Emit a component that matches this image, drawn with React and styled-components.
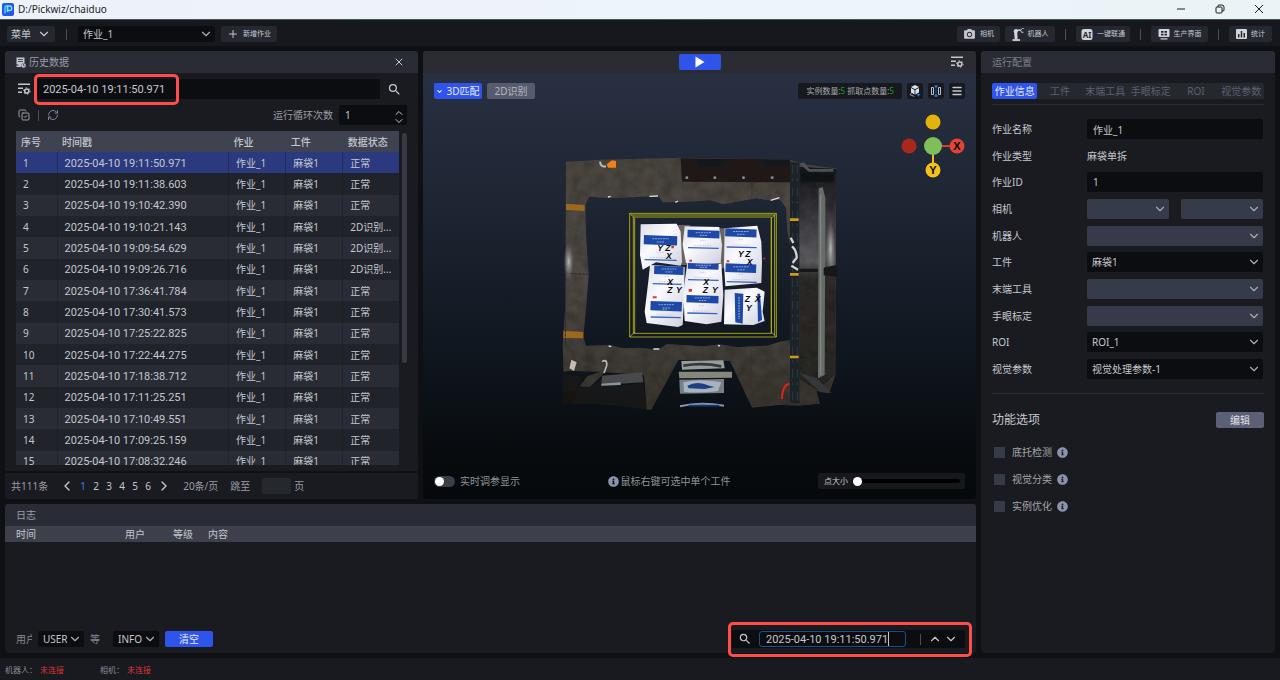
import { useState } from "react";
import styled, { createGlobalStyle } from "styled-components";
import {
  ChevronDown,
  ChevronLeft,
  ChevronRight,
  ChevronUp,
  CopyCheck,
  Menu,
  Plus,
  RefreshCw,
  X,
} from "lucide-react";
import { MdPhotoCamera, MdSearch } from "react-icons/md";
import { FaInfoCircle } from "react-icons/fa";

const GlobalStyle = createGlobalStyle`
  :root {
    --page: #0f1014;
    --panel: #1a1b20;
    --head: #2a2c35;
    --field: #0c0d10;
    --disabled: #373a48;
    --primary: #2f54eb;
    --muted: #5b6077;
    --text: #c4c7cf;
    --dim: #9a9ca3;
    --danger: #ff4d4a;
  }
  * {
    box-sizing: border-box;
  }
  body {
    margin: 0;
    background: var(--page);
    color: var(--text);
    font: 10px/16px "Noto Sans", "Noto Sans CJK SC", sans-serif;
  }
  button, input, select {
    margin: 0;
    padding: 0;
    border: none;
    outline: none;
    font: inherit;
    color: inherit;
    background: none;
  }
  svg {
    display: block;
    flex: none;
  }
`;

const Page = styled.div`
  display: flex;
  flex-direction: column;
  min-height: 100vh;
`;
const TitleBar = styled.header`
  display: flex;
  align-items: center;
  gap: 4px;
  height: 20px;
  padding: 0 14px 1px 2px;
  background: linear-gradient(90deg, #edf2fa, #eef4fc 60%, #eaf3f6);
  border-bottom: 1px solid #4b5350;
  color: #1c1c1e;
`;
const WindowButtons = styled.div`
  display: flex;
  gap: 25px;
  margin-left: auto;
  & button {
    display: flex;
    justify-content: center;
    width: 14px;
  }
`;
const Toolbar = styled.nav`
  display: flex;
  align-items: center;
  height: 26px;
  padding: 2px 8px 0 7px;
  background: #17181d;
`;
const ToolGroup = styled.div`
  display: flex;
  gap: ${(props) => props.$gap}px;
`;
const ToolButton = styled.button`
  display: flex;
  align-items: center;
  justify-content: center;
  gap: ${(props) => props.$gap || 4}px;
  width: ${(props) => props.$width}px;
  height: 16px;
  border-radius: 2px;
  background: #262831;
  font-size: ${(props) => (props.$small ? 7 : 10)}px;
  white-space: nowrap;
`;
const Divider = styled.span`
  width: 1px;
  height: 11px;
  margin: 0 ${(props) => props.$space || 10}px;
  background: #4a4e5c;
`;
const Spacer = styled.div`
  flex: 1;
`;

const SelectWrapper = styled.div`
  display: grid;
  align-items: center;
  width: ${(props) => (props.$width ? `${props.$width}px` : "100%")};
  height: ${(props) => props.$height || 20}px;
  border-radius: 2px;
  background: ${(props) => (props.$off ? "var(--disabled)" : "var(--field)")};
  & > * {
    grid-area: 1 / 1;
  }
  & svg {
    justify-self: end;
    margin-right: 2px;
    color: #a9adba;
    pointer-events: none;
  }
  & select {
    width: 100%;
    height: 100%;
    padding-left: 5px;
    color: var(--text);
    appearance: none;
    opacity: 1;
  }
`;

const Workspace = styled.main`
  flex: 1;
  display: grid;
  grid-template-columns: minmax(0, 1fr) 294px;
  gap: 5px;
  padding: 5px;
`;
const MainColumn = styled.div`
  display: flex;
  flex-direction: column;
  gap: 5px;
`;
const TopRow = styled.div`
  flex: 1;
  display: grid;
  grid-template-columns: 413px minmax(0, 1fr);
  gap: 5px;
`;
const Panel = styled.section`
  display: flex;
  flex-direction: column;
  min-width: 0;
  border-radius: 3px;
  overflow: hidden;
  background: var(--panel);
`;
const PanelHead = styled.div`
  display: flex;
  align-items: center;
  gap: 3px;
  height: 22px;
  padding: 0 ${(props) => props.$right || 11}px 0 11px;
  border-radius: 3px 3px 0 0;
  background: var(--head);
  color: ${(props) => (props.$faint ? "#7e818b" : "var(--dim)")};
  & h2 {
    margin: 0;
    font-size: 10px;
    font-weight: 400;
  }
  & > button {
    margin-left: auto;
    color: var(--text);
  }
`;

const HistoryBody = styled.div`
  flex: 1;
  display: flex;
  flex-direction: column;
  padding: 6px 11px;
`;
const SearchRow = styled.div`
  display: flex;
  align-items: center;
  gap: 5px;
  padding-left: 2px;
  & input {
    flex: 1;
    height: 20px;
    padding: 0 7px;
    border-radius: 2px;
    background: var(--field);
    font: 11px "Roboto", sans-serif;
  }
  & button {
    margin: 0 5px 0 2px;
  }
`;
const LoopRow = styled.div`
  display: flex;
  align-items: center;
  height: 20px;
  margin: 6px 0;
  padding-left: 2px;
  color: var(--dim);
  & label {
    margin: 0 6px 0 auto;
  }
`;
const Stepper = styled.div`
  display: flex;
  align-items: center;
  width: 68px;
  height: 20px;
  padding: 0 2px 0 6px;
  border-radius: 2px;
  background: var(--field);
  color: var(--text);
  & input {
    flex: 1;
    min-width: 0;
  }
  & button {
    display: block;
    height: 8px;
  }
`;
const TableArea = styled.div`
  display: flex;
  gap: 3px;
  height: 334px;
  overflow: hidden;
`;
const Scrollbar = styled.div`
  width: 5px;
  height: 230px;
  margin-top: 2px;
  border-radius: 3px;
  background: #373a44;
`;
const HistoryTable = styled.table`
  flex: 1;
  height: 341px;
  table-layout: fixed;
  border-collapse: collapse;
  & th {
    height: 21px;
    padding: 0 5px;
    background: #3f4250;
    font-weight: 500;
    text-align: left;
  }
  & td {
    padding: 0 7px;
    border-right: 1px solid rgba(20, 22, 30, 0.35);
    white-space: nowrap;
  }
  & td:last-child {
    border-right: none;
  }
  & tbody tr {
    background: #20232a;
  }
  & tbody tr:nth-child(odd) {
    background: #292c34;
  }
  & tbody tr.active {
    background: #2b3a7e;
  }
  & time {
    font: 11px "Roboto", sans-serif;
  }
`;
const Pager = styled.footer`
  display: flex;
  align-items: center;
  height: 28px;
  padding: 0 6px;
  border-top: 2px solid #101115;
  color: var(--dim);
  & label {
    margin-left: 12px;
  }
  & input {
    width: 29px;
    height: 16px;
    margin: 0 3px 0 12px;
    border-radius: 2px;
    background: #262830;
  }
`;
const PageList = styled.div`
  display: flex;
  align-items: center;
  gap: 1px;
  margin: 0 10px;
  color: var(--text);
  & button {
    display: flex;
    justify-content: center;
    width: 12px;
  }
  & button.active {
    color: #2c7be5;
  }
  & button:first-child,
  & button:last-child {
    width: 18px;
  }
`;

const ViewerHead = styled.div`
  display: grid;
  grid-template-columns: 1fr 42px 1fr;
  align-items: center;
  height: 22px;
  background: #2b2c33;
  & > :last-child {
    grid-column: 3;
    justify-self: end;
    margin-right: 12px;
  }
`;
const PlayButton = styled.button`
  grid-column: 2;
  display: grid;
  place-items: center;
  height: 16px;
  border-radius: 2px;
  background: var(--primary);
`;
const Scene = styled.div`
  position: relative;
  flex: 1;
  display: flex;
  flex-direction: column;
  padding: 10px 11px;
  background: linear-gradient(#283042, #1c2330 36%, #10161e 66%, #070b0e 90%, #06090b);
`;
const SceneBar = styled.div`
  display: flex;
  align-items: center;
  gap: 5px;
  height: 16px;
`;
const ModeButton = styled.button`
  display: flex;
  align-items: center;
  justify-content: center;
  gap: 3px;
  width: 48px;
  height: 16px;
  border-radius: 2px;
  background: ${(props) => (props.$active ? "var(--primary)" : "#575b6e")};
  color: ${(props) => (props.$active ? "#e6e9f5" : "#b5b7bf")};
`;
const Counter = styled.div`
  height: 16px;
  padding: 0 8px;
  border-radius: 2px;
  background: #17191f;
  color: #a9abb1;
  font-size: 8px;
  & b {
    color: #12a11b;
    font-weight: 400;
  }
`;
const SceneButton = styled.button`
  display: grid;
  place-items: center;
  width: 16px;
  height: 16px;
  border-radius: 2px;
  background: #17191f;
`;
const Stage = styled.div`
  flex: 1;
  display: grid;
  place-items: center;
  padding-bottom: 7px;
`;
const AxisGizmo = styled.svg`
  position: absolute;
  top: 40px;
  right: 10px;
`;
const SceneFooter = styled.div`
  display: flex;
  align-items: center;
  justify-content: space-between;
  height: 16px;
  color: #8f9194;
`;
const Switch = styled.label`
  display: flex;
  align-items: center;
  gap: 5px;
  & input {
    width: 21px;
    height: 11px;
    border-radius: 6px;
    background: #3b3e48;
    appearance: none;
  }
  & input::before {
    content: "";
    display: block;
    width: 9px;
    height: 9px;
    margin: 1px;
    border-radius: 50%;
    background: white;
  }
`;
const Hint = styled.div`
  display: flex;
  align-items: center;
  gap: 2px;
  & svg {
    color: #8b92ab;
  }
`;
const SizeSlider = styled.label`
  display: flex;
  align-items: center;
  gap: 5px;
  width: 147px;
  height: 16px;
  padding: 0 5px 0 6px;
  border-radius: 2px;
  background: #17181c;
  color: var(--text);
  font-size: 8px;
  white-space: nowrap;
  & input {
    flex: 1;
    min-width: 0;
    height: 4px;
    border-radius: 2px;
    background: black;
    appearance: none;
  }
  & input::-webkit-slider-thumb {
    width: 9px;
    height: 9px;
    border-radius: 50%;
    background: white;
    appearance: none;
  }
`;

const LogPanel = styled(Panel)`
  height: 149px;
  overflow: visible;
`;
const LogTable = styled.table`
  width: 100%;
  table-layout: fixed;
  border-collapse: collapse;
  & th {
    height: 16px;
    padding: 0 0 0 11px;
    background: #3d404b;
    line-height: 15px;
    font-weight: 400;
    text-align: left;
  }
`;
const LogControls = styled.div`
  display: flex;
  align-items: center;
  gap: 6px;
  margin-top: auto;
  padding: 0 11px 5px;
  color: #868892;
`;
const FilterLabel = styled.label`
  width: ${(props) => props.$width}px;
  margin-right: ${(props) => props.$space || 0}px;
  overflow: hidden;
  white-space: nowrap;
`;
const BlueButton = styled.button`
  width: 48px;
  height: 16px;
  border-radius: 2px;
  background: var(--primary);
  color: #e6e9f5;
`;
const FindBox = styled.div`
  position: relative;
  display: flex;
  align-items: center;
  width: 233px;
  height: 18px;
  margin-left: auto;
  padding: 0 7px 0 6px;
  border-radius: 2px;
  background: var(--field);
  color: var(--text);
`;
const FindField = styled.div`
  display: flex;
  align-items: center;
  width: 147px;
  height: 16px;
  margin-left: 7px;
  padding-left: 6px;
  border: 1px solid #1f4f8a;
  border-radius: 3px;
  & input {
    field-sizing: content;
    font: 11px "Roboto", sans-serif;
  }
`;
const FindSteps = styled.div`
  display: flex;
  gap: 2px;
`;
const Caret = styled.span`
  width: 1px;
  height: 14px;
  background: #c4c7cf;
`;
/* red frame that lies over the page around a field */
const Marker = styled.div`
  position: absolute;
  inset: ${(props) => props.$inset};
  width: ${(props) => (props.$width ? `${props.$width}px` : "auto")};
  border: 3px solid var(--danger);
  border-radius: 5px;
  pointer-events: none;
`;
const MarkedField = styled.div`
  position: relative;
  flex: 1;
  display: flex;
`;

const ConfigBody = styled.div`
  display: flex;
  flex-direction: column;
  padding: 10px 11px;
`;
const Tabs = styled.div`
  display: grid;
  grid-template-columns: repeat(6, 1fr);
  border-radius: 2px;
  background: #26282f;
  color: #5c6070;
  & button {
    height: 16px;
    border-radius: 2px;
    white-space: nowrap;
  }
  & button.active {
    background: var(--primary);
    color: #e6e9f5;
  }
`;
const Rule = styled.hr`
  width: 100%;
  height: 1px;
  margin: ${(props) => props.$space};
  border: none;
  background: #2b2d33;
`;
const Form = styled.div`
  display: flex;
  flex-direction: column;
  justify-content: space-between;
  height: 260px;
`;
const FormRow = styled.div`
  display: grid;
  grid-template-columns: 95px 1fr;
  align-items: center;
  height: 20px;
  padding-right: 1px;
`;
const TextField = styled.input`
  width: 100%;
  height: 20px;
  padding: 0 6px;
  border-radius: 2px;
  background: var(--field);
`;
const Pair = styled.div`
  display: grid;
  grid-template-columns: 1fr 1fr;
  gap: 12px;
`;
const OptionsHead = styled.div`
  display: flex;
  align-items: center;
  justify-content: space-between;
  margin-bottom: 14px;
  & h3 {
    margin: 0;
    font-size: 12px;
    font-weight: 400;
  }
  & button {
    width: 48px;
    height: 16px;
    border-radius: 2px;
    background: var(--muted);
    color: #e0e2ea;
  }
`;
const Options = styled.div`
  display: flex;
  flex-direction: column;
  gap: 7px;
  padding: 0 2px;
  & label {
    display: flex;
    align-items: center;
    height: 20px;
    color: #a5a6aa;
  }
  & input {
    width: 11px;
    height: 11px;
    margin-right: 7px;
    background: var(--disabled);
    appearance: none;
  }
  & svg {
    margin-left: 5px;
    color: #8b92ab;
  }
`;
const StatusBar = styled.footer`
  display: flex;
  gap: 36px;
  height: 22px;
  padding: 4px 5px;
  background: #191a1f;
  color: #8b8e97;
  font-size: 8px;
  & b {
    margin-left: 3px;
    color: #d8343a;
    font-weight: 400;
  }
`;

const stamps = [
  "2025-04-10 19:11:50.971",
  "2025-04-10 19:11:38.603",
  "2025-04-10 19:10:42.390",
  "2025-04-10 19:10:21.143",
  "2025-04-10 19:09:54.629",
  "2025-04-10 19:09:26.716",
  "2025-04-10 17:36:41.784",
  "2025-04-10 17:30:41.573",
  "2025-04-10 17:25:22.825",
  "2025-04-10 17:22:44.275",
  "2025-04-10 17:18:38.712",
  "2025-04-10 17:11:25.251",
  "2025-04-10 17:10:49.551",
  "2025-04-10 17:09:25.159",
  "2025-04-10 17:08:32.246",
];

const tabs = ["作业信息", "工件", "末端工具", "手眼标定", "ROI", "视觉参数"];
const options = ["底托检测", "视觉分类", "实例优化"];

const SelectBox = ({ id, label, value = "", width, height, off }) => (
  <SelectWrapper $width={width} $height={height} $off={off}>
    <select id={id} aria-label={label} disabled={off}>
      <option>{value}</option>
    </select>
    <ChevronDown size={14} />
  </SelectWrapper>
);

const AppLogo = () => (
  <svg width="12" height="13" viewBox="0 0 12 13">
    <rect width="12" height="13" rx="2" fill="#2457ea" />
    <path d="M3 10.500V4.500Q3 3 4.500 3H5.500V8.500" fill="none" stroke="#3fd7f5" strokeWidth="1.500" />
    <path d="M5.500 9V3H7.500a2 2 0 0 1 0 4.500H5.500" fill="none" stroke="#7fe6fb" strokeWidth="1.400" />
  </svg>
);

const FilterIcon = () => (
  <svg width="13" height="12" viewBox="0 0 13 12" fill="none" stroke="#c4c7cf">
    <path d="M0 1.200h12M0 5.200h5M0 9.200h4" strokeWidth="1.400" />
    <circle cx="8.800" cy="8" r="2.100" strokeWidth="1.500" />
    <circle cx="8.800" cy="8" r="3.300" strokeWidth="1" strokeDasharray="1.300 2.150" />
  </svg>
);

const HistoryIcon = () => (
  <svg width="10" height="11" viewBox="0 0 10 11">
    <path d="M0.500 0.500h8v5.500a3 3 0 0 0-3.500 4H0.500V8.500H2.500V7.500H0.500z" fill="#c4c7cf" />
    <path d="M2 2.500h5M2 4.500h5" stroke="#2a2c35" strokeWidth="0.800" />
    <circle cx="7.500" cy="8.500" r="2.300" fill="#c4c7cf" />
    <path d="M7.500 7v1.700h1.300" stroke="#2a2c35" strokeWidth="0.700" fill="none" />
  </svg>
);

const RobotIcon = () => (
  <svg width="12" height="13" viewBox="0 0 12 13" fill="none" stroke="#d3d5da">
    <path d="M0.500 12h7.500" strokeWidth="1.800" />
    <path d="M4.200 11L3.600 4" strokeWidth="3" />
    <circle cx="3.800" cy="3.200" r="1.700" fill="#d3d5da" />
    <path d="M4 2.500L8.500 2" strokeWidth="1.600" />
    <path d="M8.500 2l2-1.500M8.500 2l1 2.300h2M10.500 0.500h1.200" strokeWidth="0.900" />
  </svg>
);

const AiIcon = () => (
  <svg width="12" height="11" viewBox="0 0 12 11">
    <rect x="0.500" width="11" height="11" rx="2.500" fill="#d3d5da" />
    <text x="6" y="8.500" fontSize="8" fontWeight="700" textAnchor="middle" fill="#262831">
      AI
    </text>
  </svg>
);

const ScreenIcon = () => (
  <svg width="12" height="11" viewBox="0 0 12 11" fill="#d3d5da">
    <rect x="0.500" width="11" height="8" rx="1" />
    <path d="M3 2h2.500v1.800H3zM6.500 2H9v1.800H6.500zM3 4.700h2.500v1.700H3zM6.500 4.700H9v1.700H6.500z" fill="#262831" />
    <path d="M2.500 9.300h7v1.200h-7z" />
  </svg>
);

const StatsIcon = () => (
  <svg width="11" height="10" viewBox="0 0 11 10">
    <rect width="11" height="10" rx="1" fill="#d3d5da" />
    <path d="M2.700 8.500V5M5.500 8.500V2M8.300 8.500V4" stroke="#262831" strokeWidth="1.500" />
  </svg>
);

const CubeIcon = () => (
  <svg width="12" height="12" viewBox="0 0 12 12">
    <path d="M6 0l4 2-4 2.200L2 2zM2 3l3.600 2v4.500L2 7.500zM10 3L6.400 5v4.500L10 7.500z" fill="#dcdfe5" />
    <path d="M0.800 9.500l4.500 2M1 9.500l1.500-1" stroke="#9ba0aa" />
    <path d="M7.500 9h4L9.500 11.500z" fill="#1c86e8" />
  </svg>
);

const PanesIcon = () => (
  <svg width="12" height="12" viewBox="0 0 12 12" fill="none">
    <path d="M1.500 2.500h2v7h-2zM8.500 2.500h2v7h-2z" stroke="#b9bcc5" />
    <path d="M4.500 1h3M4.500 11h3M6 1v2M6 9v2" stroke="#1c86e8" strokeWidth="1.300" />
    <path d="M6 3.500v5" stroke="#1c86e8" strokeWidth="0.600" />
  </svg>
);

const Sack = ({ d, bands, lines, marks }) => (
  <g>
    <path d={d} fill="url(#sack)" />
    {bands.map(([x, y, w, h]) => (
      <g key={`${x}-${y}`}>
        <rect x={x} y={y} width={w} height={h} fill="#1d48a5" transform={`rotate(2 ${x} ${y})`} />
        <path
          d={`M${x + w * 0.25} ${y + h * 0.4}h${w * 0.5}M${x + w * 0.38} ${y + h * 0.75}h${w * 0.24}`}
          stroke="#8fa5dc"
          strokeWidth="3"
          strokeDasharray="6 2"
        />
      </g>
    ))}
    {lines.map(([x, y, w]) => (
      <g key={`${x}-${y}`}>
        <path d={`M${x} ${y}l${w} 2`} stroke="#3a62b8" strokeWidth="4" />
        <path
          d={`M${x + 36} ${y - 22}h${w - 74}M${x + 18} ${y - 6}h${w - 40}`}
          stroke="#b6b8cc"
          strokeWidth="2"
          strokeDasharray="5 3"
        />
      </g>
    ))}
    {marks.map(([letter, x, y]) => (
      <text key={letter} x={x} y={y}>
        {letter}
      </text>
    ))}
  </g>
);

const PointCloud = () => (
  <svg width="300" height="275" viewBox="0 0 900 825">
    <defs>
      <linearGradient id="floor" x1="0" y1="0" x2="0" y2="1">
        <stop offset="0" stopColor="#4b4640" />
        <stop offset="0.500" stopColor="#4d4a45" />
        <stop offset="1" stopColor="#39352f" />
      </linearGradient>
      <linearGradient id="side" x1="0" y1="0" x2="0" y2="1">
        <stop offset="0" stopColor="#1a1b1d" />
        <stop offset="0.220" stopColor="#3a3a3f" />
        <stop offset="0.420" stopColor="#5d5e61" />
        <stop offset="0.500" stopColor="#2f2d2b" />
        <stop offset="1" stopColor="#2b2825" />
      </linearGradient>
      <linearGradient id="sack" x1="0" y1="0" x2="1" y2="1">
        <stop offset="0" stopColor="#dcdde9" />
        <stop offset="0.400" stopColor="#fafaff" />
        <stop offset="1" stopColor="#cfd0df" />
      </linearGradient>
      <radialGradient id="glow">
        <stop offset="0" stopColor="#d5d6d8" stopOpacity="0.800" />
        <stop offset="1" stopColor="#8b8b8b" stopOpacity="0" />
      </radialGradient>
      <filter id="grain" x="0" y="0" width="1" height="1">
        <feTurbulence type="fractalNoise" baseFrequency="0.030" numOctaves="4" seed="4" />
        <feColorMatrix values="0 0 0 0 0  0 0 0 0 0  0 0 0 0 0  0.450 0.450 0 0 -0.330" />
        <feComposite in2="SourceGraphic" operator="in" />
        <feMerge>
          <feMergeNode in="SourceGraphic" />
          <feMergeNode />
        </feMerge>
      </filter>
    </defs>
    {/* factory floor around the pallet, hole included */}
    <path
      filter="url(#grain)"
      fillRule="evenodd"
      fill="url(#floor)"
      d="M48 50L150 44L390 38L720 44L760 58L858 70L856 690L838 745L800 738L810 776L745 782L690 780L606 788L540 648L385 645L304 794L290 794L282 690L165 682L120 726L88 724L112 694L150 680L60 678L40 680L38 600L46 480L46 300zM118 155L180 160L325 153L338 172L380 172L420 170L480 166L520 178L620 160L650 166L690 165L708 190L712 260L720 300V585L690 590L650 602L560 606L508 598L460 604L350 597L325 614L270 608L220 610L182 600L108 602L100 575L110 470L116 390L108 270L106 180z"
    />
    <path
      d="M40 686L60 690L96 696L84 724L120 728L160 700V720L206 722L280 714L292 794L250 788L200 782L110 776L38 776L60 740L38 742z"
      fill="#211e1a"
      opacity="0.500"
    />
    <path d="M40 740L70 738L80 756L64 778L38 776z" fill="#16140f" />
    <path d="M48 176L104 180V198L48 195zM40 557L100 561V580L40 579z" fill="#9c681d" />
    <path d="M48 385L114 388M46 110V600" stroke="#28292c" strokeWidth="3" strokeDasharray="9 3" />
    <ellipse cx="56" cy="350" rx="16" ry="56" fill="url(#glow)" />
    <path d="M392 40L720 44V112L396 110z" fill="#201817" />
    <path d="M440 42h86l-12 24h-64zM636 44h84v20h-74z" fill="#14181d" />
    <path d="M410 98h1M494 98h1M580 98h1M666 98h1" stroke="#7e8b95" strokeWidth="8" strokeLinecap="round" />
    <path d="M170 58l16-12 12 2v20h-24z" fill="#f08019" />
    <path d="M150 50q2 18 18 14" stroke="#b9bfc4" strokeWidth="6" fill="none" />
    <path d="M606 110V156M604 612V780" stroke="#37342f" strokeWidth="3" />
    {/* machine frame on the right */}
    <path d="M748 66L858 72L854 690L800 735L748 700z" fill="url(#side)" filter="url(#grain)" />
    <path d="M752 84h98v26h-98z" fill="#101315" />
    <path d="M748 56l14-4 16 20h72v8h-74z" fill="#4a5354" />
    <ellipse cx="842" cy="310" rx="14" ry="90" fill="url(#glow)" />
    <path d="M806 130L818 126L826 160L824 690L804 700z" fill="#666d68" />
    <path d="M812 150V690" stroke="#858b86" strokeWidth="3" />
    <path d="M748 376h56M826 372l30-6v24l-30-4z" stroke="#15171a" strokeWidth="10" fill="#15171a" />
    <path d="M720 50L748 54V776L720 772z" fill="#1b2329" />
    <path d="M728 60V770M742 60V770" stroke="#3a454c" strokeWidth="2" strokeDasharray="26 14 8 20" />
    <path d="M726 304q14 12 14 34l-12 16M722 278l8 16M724 362l20 12" stroke="#cfd6da" strokeWidth="7" fill="none" />
    <path d="M720 224h26M720 388h26M720 636h26" stroke="#d39a18" strokeWidth="8" />
    <path d="M748 684L800 700L844 744L812 742z" fill="#34383a" />
    <path d="M718 716q-22 6-22 46" stroke="#d8231f" strokeWidth="6" fill="none" />
    {/* conveyor and boxes at the bottom */}
    <path d="M394 648L520 646L524 670L396 674z" fill="#989d9b" />
    <path d="M400 662q60-10 114 2" stroke="#333a3e" strokeWidth="8" fill="none" />
    <path d="M386 680L546 680L546 698L388 700z" fill="#85877b" />
    <path d="M388 704L522 702V744L390 746z" fill="#767e86" />
    <path d="M400 712Q450 700 514 712L504 738Q440 746 402 740z" fill="#a9b2c0" />
    <path d="M412 722q30-16 66 0l16 4-30 6-48-2z" fill="#1e3f80" />
    <path d="M390 784q60-14 132-2" stroke="#8597b0" strokeWidth="6" fill="none" />
    <path d="M416 782h92" stroke="#19366f" strokeWidth="5" />
    <path d="M156 692L276 682L280 712L154 720z" fill="#47494a" />
    <path d="M154 716l58-4v8l-58 2z" fill="#8d9697" />
    <path d="M64 644l16 8-8 26-14-8z" fill="#c1bdb2" />
    <path d="M156 650q16-10 14 12l-8 22" stroke="#b9bbb9" strokeWidth="5" fill="none" />
    <path
      d="M174 156l8-2M298 154l26-1M376 172l8-4M662 166l26-8M176 603l8 2M310 612l18 0M504 601l6 2"
      stroke="#d9dade"
      strokeWidth="4"
    />

    <path d="M380 240h40v120h-40zM510 250h18v120h-18z" fill="#68635c" />
    <g fontFamily="Liberation Sans" fontSize="26" fontWeight="700" fontStyle="italic" fill="#080808">
      <Sack
        d="M272 238L380 236L392 260L396 350L392 362L318 352L278 374L270 330z"
        bands={[[282, 270, 100, 28]]}
        lines={[[284, 344, 96]]}
        marks={[["Y", 322, 318], ["Z", 346, 318], ["X", 348, 343]]}
      />
      <Sack
        d="M404 244L508 246L516 300L512 354L408 354L398 300z"
        bands={[[413, 254, 96, 23]]}
        lines={[[414, 308, 92]]}
        marks={[]}
      />
      <Sack
        d="M524 250L622 242L634 290L636 350L634 414L526 424L522 360z"
        bands={[[526, 250, 94, 24], [527, 355, 92, 26]]}
        lines={[[530, 306, 90], [530, 410, 90]]}
        marks={[["Y", 564, 336], ["Z", 586, 336], ["X", 590, 361]]}
      />
      <Sack
        d="M300 360L404 366L402 470L398 540L384 546L290 534L284 500L296 400z"
        bands={[[313, 362, 88, 25], [302, 468, 94, 28]]}
        lines={[[308, 416, 86], [302, 516, 90]]}
        marks={[["X", 352, 420], ["Z", 352, 443], ["Y", 378, 443]]}
      />
      <Sack
        d="M412 352L514 356L520 450L514 530L470 538L404 528L400 440z"
        bands={[[414, 354, 92, 17], [410, 450, 96, 22]]}
        lines={[[414, 404, 92], [412, 504, 90]]}
        marks={[["X", 460, 420], ["Z", 458, 443], ["Y", 486, 443]]}
      />
      <path d="M524 434L620 428L644 440L638 500L644 528L610 540L522 538z" fill="url(#sack)" />
      <path d="M554 444L580 446L578 536L556 532zM622 446L630 446L636 524L624 532z" fill="#1d48a5" />
      <path d="M567 456V522" stroke="#8fa5dc" strokeWidth="4" strokeDasharray="5 3" />
      <text x="584" y="472">Z</text>
      <text x="614" y="472">X</text>
      <text x="588" y="497">Y</text>
    </g>
    <path
      d="M364 302h8v8h-8zM308 454h12v6h-12zM416 432h10v8h-10zM418 344h8v6h-8zM530 346h8v6h-8zM640 338h5v5h-5z"
      fill="#d3392e"
    />
    {/* detection region */}
    <path
      d="M239 205H679V576H239zM250 216H664V565H250zM244 210H674V571M239 205L254 220M679 205L664 220M239 576L254 561M679 576L664 561M254 220V565M664 220V565"
      fill="none"
      stroke="#bdbb16"
      strokeWidth="2.500"
    />
  </svg>
);

const AppHeader = () => (
  <>
    <TitleBar>
      <AppLogo />
      <span>D:/Pickwiz/chaiduo</span>
      <WindowButtons>
        <button aria-label="最小化">
          <svg width="10" height="10" viewBox="0 0 10 10">
            <path d="M1 5h8" stroke="#1c1c1e" />
          </svg>
        </button>
        <button aria-label="还原">
          <svg width="10" height="10" viewBox="0 0 10 10" fill="none" stroke="#1c1c1e">
            <rect x="1" y="3" width="6" height="6" rx="1" />
            <path d="M3 3V2a1 1 0 0 1 1-1h3a2 2 0 0 1 2 2v3a1 1 0 0 1-1 1H7" />
          </svg>
        </button>
        <button aria-label="关闭">
          <svg width="10" height="10" viewBox="0 0 10 10">
            <path d="M1 1l8 8M9 1L1 9" stroke="#1c1c1e" />
          </svg>
        </button>
      </WindowButtons>
    </TitleBar>
    <Toolbar>
      <ToolButton $width={48} $gap={6}>
        菜单
        <ChevronDown size={14} />
      </ToolButton>
      <Divider $space={11} />
      <ToolGroup $gap={6}>
        <SelectBox label="作业" value="作业_1" width={137} height={16} />
        <ToolButton $width={56} $small>
          <Plus size={12} />
          新增作业
        </ToolButton>
      </ToolGroup>
      <Spacer />
      <ToolGroup $gap={5}>
        <ToolButton $width={43} $small>
          <MdPhotoCamera size={13} />
          相机
        </ToolButton>
        <ToolButton $width={50} $small>
          <RobotIcon />
          机器人
        </ToolButton>
      </ToolGroup>
      <Divider />
      <ToolButton $width={54} $small>
        <AiIcon />
        一键联通
      </ToolButton>
      <Divider />
      <ToolButton $width={57} $small>
        <ScreenIcon />
        生产界面
      </ToolButton>
      <Divider />
      <ToolButton $width={43} $small>
        <StatsIcon />
        统计
      </ToolButton>
    </Toolbar>
  </>
);

const HistoryPanel = () => {
  const [selected, setSelected] = useState(0);
  const [query, setQuery] = useState(stamps[0]);
  return (
    <Panel>
      <PanelHead $right={13}>
        <HistoryIcon />
        <h2>历史数据</h2>
        <button aria-label="关闭">
          <X size={12} />
        </button>
      </PanelHead>
      <HistoryBody>
        <SearchRow>
          <FilterIcon />
          <MarkedField>
            <input
              aria-label="搜索历史数据"
              value={query}
              onChange={(event) => setQuery(event.target.value)}
            />
            <Marker $inset="-5px auto -6px -2px" $width={145} />
          </MarkedField>
          <button aria-label="搜索">
            <MdSearch size={15} />
          </button>
        </SearchRow>
        <LoopRow>
          <CopyCheck size={12} />
          <Divider $space={8} />
          <RefreshCw size={12} color="#7f869b" />
          <label htmlFor="loops">运行循环次数</label>
          <Stepper>
            <input id="loops" defaultValue="1" />
            <div>
              <button aria-label="增加">
                <ChevronUp size={12} />
              </button>
              <button aria-label="减少">
                <ChevronDown size={12} />
              </button>
            </div>
          </Stepper>
        </LoopRow>
        <TableArea>
          <HistoryTable>
            <colgroup>
              <col width="41" />
              <col width="171" />
              <col width="57" />
              <col width="57" />
              <col width="56" />
            </colgroup>
            <thead>
              <tr>
                <th>序号</th>
                <th>时间戳</th>
                <th>作业</th>
                <th>工件</th>
                <th>数据状态</th>
              </tr>
            </thead>
            <tbody>
              {stamps.map((stamp, id) => (
                <tr
                  key={stamp}
                  className={id === selected ? "active" : ""}
                  onClick={() => setSelected(id)}
                >
                  <td>{id + 1}</td>
                  <td>
                    <time>{stamp}</time>
                  </td>
                  <td>作业_1</td>
                  <td>麻袋1</td>
                  <td>{id > 2 && id < 6 ? "2D识别..." : "正常"}</td>
                </tr>
              ))}
            </tbody>
          </HistoryTable>
          <Scrollbar />
        </TableArea>
      </HistoryBody>
      <Pager>
        共111条
        <PageList>
          <button aria-label="上一页">
            <ChevronLeft size={16} />
          </button>
          {[1, 2, 3, 4, 5, 6].map((page) => (
            <button key={page} className={page === 1 ? "active" : ""}>
              {page}
            </button>
          ))}
          <button aria-label="下一页">
            <ChevronRight size={16} />
          </button>
        </PageList>
        20条/页
        <label htmlFor="jump">跳至</label>
        <input id="jump" />
        页
      </Pager>
    </Panel>
  );
};

const Viewer = () => (
  <Panel>
    <ViewerHead>
      <PlayButton aria-label="运行">
        <svg width="10" height="12" viewBox="0 0 10 12">
          <path d="M0.500 0.500L9.500 6L0.500 11.500z" fill="white" />
        </svg>
      </PlayButton>
      <button aria-label="显示设置">
        <FilterIcon />
      </button>
    </ViewerHead>
    <Scene>
      <SceneBar>
        <ModeButton $active>
          <ChevronDown size={7} strokeWidth={4} />
          3D匹配
        </ModeButton>
        <ModeButton>2D识别</ModeButton>
        <Spacer />
        <Counter>
          实例数量:<b>5</b> 抓取点数量:<b>5</b>
        </Counter>
        <SceneButton aria-label="视角">
          <CubeIcon />
        </SceneButton>
        <SceneButton aria-label="分屏">
          <PanesIcon />
        </SceneButton>
        <SceneButton aria-label="菜单">
          <Menu size={12} strokeWidth={3} />
        </SceneButton>
      </SceneBar>
      <Stage>
        <PointCloud />
      </Stage>
      <AxisGizmo width="66" height="66" viewBox="0 0 66 66">
        <path d="M33 33h24" stroke="#d5402f" strokeWidth="2" />
        <path d="M33 33v24" stroke="#f0bd19" strokeWidth="2" />
        <circle cx="33" cy="9" r="7.500" fill="#e4b20d" />
        <circle cx="9" cy="33" r="7.500" fill="#a8281c" />
        <circle cx="57" cy="33" r="7.500" fill="#e24333" />
        <circle cx="33" cy="57" r="7.500" fill="#f3c01c" />
        <circle cx="33" cy="33" r="9" fill="#7fbf5a" />
        <g fontFamily="Liberation Sans" fontSize="11" fontWeight="700" textAnchor="middle" fill="#0a0a0a">
          <text x="57" y="37">X</text>
          <text x="33" y="61">Y</text>
        </g>
      </AxisGizmo>
      <SceneFooter>
        <Switch>
          <input type="checkbox" role="switch" />
          实时调参显示
        </Switch>
        <Hint>
          <FaInfoCircle size={11} />
          鼠标右键可选中单个工件
        </Hint>
        <SizeSlider>
          点大小
          <input type="range" min="0" max="100" defaultValue="0" />
        </SizeSlider>
      </SceneFooter>
    </Scene>
  </Panel>
);

const Log = () => {
  const [query, setQuery] = useState(stamps[0]);
  return (
    <LogPanel>
      <PanelHead>
        <h2>日志</h2>
      </PanelHead>
      <LogTable>
        <colgroup>
          <col width="109" />
          <col width="48" />
          <col width="35" />
          <col />
        </colgroup>
        <thead>
          <tr>
            <th>时间</th>
            <th>用户</th>
            <th>等级</th>
            <th>内容</th>
          </tr>
        </thead>
      </LogTable>
      <LogControls>
        <FilterLabel htmlFor="user" $width={16}>
          用户
        </FilterLabel>
        <SelectBox id="user" value="USER" width={46} height={16} />
        <FilterLabel htmlFor="level" $width={11} $space={6}>
          等
        </FilterLabel>
        <SelectBox id="level" value="INFO" width={46} height={16} />
        <BlueButton>清空</BlueButton>
        <FindBox>
          <MdSearch size={14} />
          <FindField>
            <input
              aria-label="搜索日志"
              value={query}
              onChange={(event) => setQuery(event.target.value)}
            />
            <Caret />
          </FindField>
          <Spacer />
          <Divider $space={7} />
          <FindSteps>
            <button aria-label="上一个">
              <ChevronUp size={14} />
            </button>
            <button aria-label="下一个">
              <ChevronDown size={14} />
            </button>
          </FindSteps>
          <Marker $inset="-8px -7px -9px -4px" />
        </FindBox>
      </LogControls>
    </LogPanel>
  );
};

const Config = () => {
  const [tab, setTab] = useState(tabs[0]);
  return (
    <Panel>
      <PanelHead $faint>
        <h2>运行配置</h2>
      </PanelHead>
      <ConfigBody>
        <Tabs>
          {tabs.map((name) => (
            <button
              key={name}
              className={name === tab ? "active" : ""}
              onClick={() => setTab(name)}
            >
              {name}
            </button>
          ))}
        </Tabs>
        <Rule $space="5px 0 14px" />
        <Form>
          <FormRow>
            <label htmlFor="name">作业名称</label>
            <TextField id="name" defaultValue="作业_1" />
          </FormRow>
          <FormRow>
            <span>作业类型</span>
            <span>麻袋单拆</span>
          </FormRow>
          <FormRow>
            <label htmlFor="job">作业ID</label>
            <TextField id="job" defaultValue="1" />
          </FormRow>
          <FormRow>
            <label htmlFor="camera">相机</label>
            <Pair>
              <SelectBox id="camera" off />
              <SelectBox label="相机型号" off />
            </Pair>
          </FormRow>
          <FormRow>
            <label htmlFor="robot">机器人</label>
            <SelectBox id="robot" off />
          </FormRow>
          <FormRow>
            <label htmlFor="piece">工件</label>
            <SelectBox id="piece" value="麻袋1" />
          </FormRow>
          <FormRow>
            <label htmlFor="tool">末端工具</label>
            <SelectBox id="tool" off />
          </FormRow>
          <FormRow>
            <label htmlFor="calibration">手眼标定</label>
            <SelectBox id="calibration" off />
          </FormRow>
          <FormRow>
            <label htmlFor="roi">ROI</label>
            <SelectBox id="roi" value="ROI_1" />
          </FormRow>
          <FormRow>
            <label htmlFor="vision">视觉参数</label>
            <SelectBox id="vision" value="视觉处理参数-1" />
          </FormRow>
        </Form>
        <Rule $space="14px 0 18px" />
        <OptionsHead>
          <h3>功能选项</h3>
          <button>编辑</button>
        </OptionsHead>
        <Options>
          {options.map((name) => (
            <label key={name}>
              <input type="checkbox" />
              {name}
              <FaInfoCircle size={11} />
            </label>
          ))}
        </Options>
      </ConfigBody>
    </Panel>
  );
};

const App = () => {
  return (
    <Page>
      <GlobalStyle />
      <AppHeader />
      <Workspace>
        <MainColumn>
          <TopRow>
            <HistoryPanel />
            <Viewer />
          </TopRow>
          <Log />
        </MainColumn>
        <Config />
      </Workspace>
      <StatusBar>
        <span>
          机器人：<b>未连接</b>
        </span>
        <span>
          相机：<b>未连接</b>
        </span>
      </StatusBar>
    </Page>
  );
};
export default App;
